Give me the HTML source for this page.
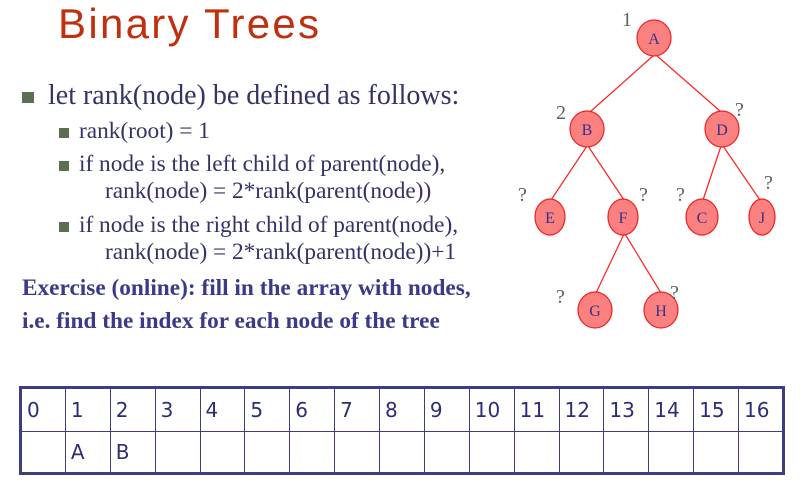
<!DOCTYPE html>
<html><head><style>
body{margin:0;width:809px;height:490px;background:#fff;position:relative;overflow:hidden;font-family:"Liberation Serif",serif;color:#333366}
.a{position:absolute;white-space:nowrap;line-height:1}
.sq{position:absolute;background:#5a7050}
table{position:absolute;left:19px;top:386px;border-collapse:collapse;table-layout:fixed;width:766px;border:3px solid #3c3c80;font-family:"DejaVu Sans","Liberation Sans",sans-serif;font-size:20px;color:#2c2c78}
td{border:1.5px solid #3c3c80;height:44px;padding:0 0 0 5px;vertical-align:middle;box-sizing:border-box}
tr+tr td{height:42px}
</style></head><body>
<div class="a" style="left:58px;top:3px;font-family:'Liberation Sans',sans-serif;font-size:42px;letter-spacing:2.3px;color:#c0300e">Binary Trees</div>
<div class="sq" style="left:22px;top:92px;width:12px;height:11px"></div>
<div class="a" style="left:48px;top:82px;font-size:28px">let rank(node) be defined as follows:</div>
<div class="sq" style="left:59px;top:128px;width:10px;height:10px"></div>
<div class="a" style="left:79px;top:120px;font-size:23.3px">rank(root) = 1</div>
<div class="sq" style="left:59px;top:161px;width:10px;height:10px"></div>
<div class="a" style="left:79px;top:153px;font-size:23.3px">if node is the left child of parent(node),</div>
<div class="a" style="left:105px;top:180px;font-size:23.3px">rank(node) = 2*rank(parent(node))</div>
<div class="sq" style="left:59px;top:222px;width:10px;height:10px"></div>
<div class="a" style="left:79px;top:214px;font-size:23.3px">if node is the right child of parent(node),</div>
<div class="a" style="left:105px;top:241px;font-size:23.3px">rank(node) = 2*rank(parent(node))+1</div>
<div class="a" style="left:22px;top:277px;font-size:23.3px;font-weight:bold;color:#3a3a88">Exercise (online): fill in the array with nodes,</div>
<div class="a" style="left:22px;top:310px;font-size:23.3px;font-weight:bold;color:#3a3a88">i.e. find the index for each node of the tree</div>

<svg style="position:absolute;left:0;top:0" width="809" height="490" font-family="Liberation Serif,serif">
<g stroke="#ff2020" stroke-width="1.2">
<line x1="654" y1="55" x2="590" y2="112"/><line x1="656" y1="55" x2="720" y2="111"/>
<line x1="587" y1="146" x2="551" y2="200"/><line x1="588" y1="146" x2="624" y2="200"/>
<line x1="721" y1="146" x2="703" y2="200"/><line x1="723" y1="146" x2="760" y2="200"/>
<line x1="624" y1="234" x2="596" y2="293"/><line x1="625" y1="234" x2="661" y2="293"/>
</g>
<g fill="#fb8080" stroke="#ee2020" stroke-width="1.2">
<ellipse cx="654" cy="38" rx="17" ry="18"/><ellipse cx="587" cy="129" rx="17" ry="18"/>
<ellipse cx="722" cy="129" rx="17" ry="18"/><ellipse cx="550" cy="217" rx="15" ry="18"/>
<ellipse cx="623" cy="217" rx="15" ry="18"/><ellipse cx="702" cy="217" rx="16" ry="18"/>
<ellipse cx="762" cy="217" rx="13" ry="18"/><ellipse cx="595" cy="310" rx="17" ry="18"/>
<ellipse cx="661" cy="310" rx="17" ry="18"/>
</g>
<g fill="#333388" font-size="16" text-anchor="middle">
<text x="654" y="44">A</text><text x="587" y="135">B</text><text x="722" y="135">D</text>
<text x="550" y="223">E</text><text x="623" y="223">F</text><text x="702" y="223">C</text>
<text x="762" y="223">J</text><text x="595" y="316">G</text><text x="661" y="316">H</text>
</g>
<g fill="#556655" font-size="20">
<text x="622" y="26">1</text><text x="556" y="119">2</text><text x="735" y="116">?</text>
<text x="518" y="201">?</text><text x="639" y="201">?</text><text x="676" y="201">?</text>
<text x="764" y="189">?</text><text x="556" y="303">?</text><text x="670" y="299">?</text>
</g>
</svg>

<table>
<tr><td>0</td><td>1</td><td>2</td><td>3</td><td>4</td><td>5</td><td>6</td><td>7</td><td>8</td><td>9</td><td>10</td><td>11</td><td>12</td><td>13</td><td>14</td><td>15</td><td>16</td></tr>
<tr><td></td><td>A</td><td>B</td><td></td><td></td><td></td><td></td><td></td><td></td><td></td><td></td><td></td><td></td><td></td><td></td><td></td><td></td></tr>
</table>
</body></html>
